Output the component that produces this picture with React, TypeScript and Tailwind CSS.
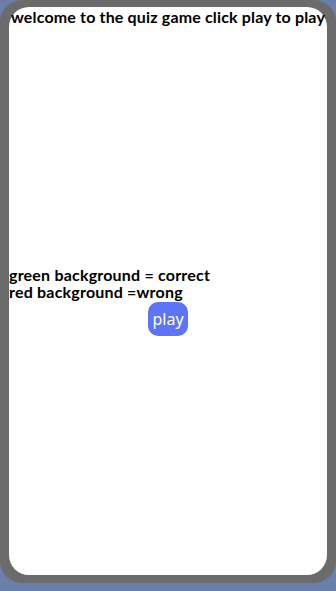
export default function App() {
  return (
    <div className="w-[336px] h-[591px] bg-[#6a7eaa] font-['Lato',sans-serif]">
      <div className="h-[583px] rounded-[22px] bg-[#6b6b6b] pt-[7px] pb-[8px] pl-[9px] pr-[9px]">
        <div className="h-full rounded-[20px] bg-white flex flex-col">
          <h1 className="text-center whitespace-nowrap text-[16px] leading-[20px] font-bold text-black tracking-[0.16px]">
            welcome to the quiz game click play to play
          </h1>
          <div className="mt-[239px] text-[16px] leading-[17px] font-bold text-black tracking-[0.2px]">
            <p>green background = correct</p>
            <p>red background =wrong</p>
          </div>
          <div className="flex justify-center mt-[2px]">
            <button className="w-[40px] h-[34px] rounded-[10px] bg-[#5d74f5] text-white text-[16px] font-['Noto_Sans',sans-serif]">
              play
            </button>
          </div>
        </div>
      </div>
    </div>
  )
}
